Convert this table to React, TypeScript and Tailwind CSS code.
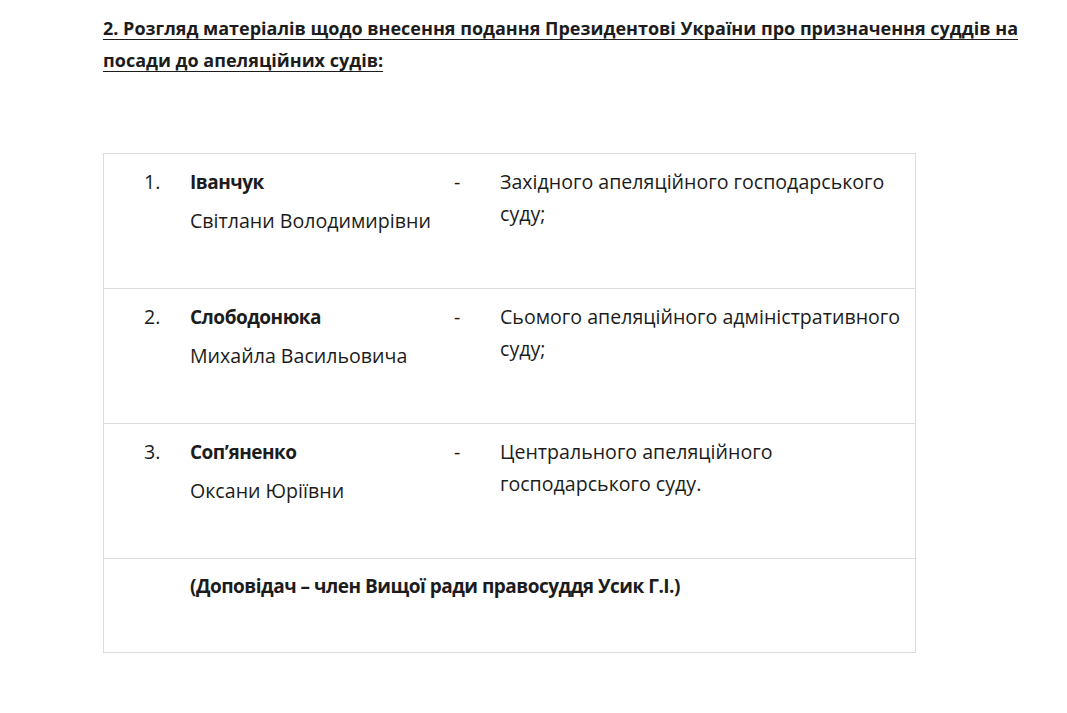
import React from 'react';

type Row = {
  num: string;
  surname: string;
  given: string;
  court: string[];
};

const rows: Row[] = [
  {
    num: '1.',
    surname: 'Іванчук',
    given: 'Світлани Володимирівни',
    court: ['Західного апеляційного господарського', 'суду;'],
  },
  {
    num: '2.',
    surname: 'Слободонюка',
    given: 'Михайла Васильовича',
    court: ['Сьомого апеляційного адміністративного', 'суду;'],
  },
  {
    num: '3.',
    surname: 'Соп’яненко',
    given: 'Оксани Юріївни',
    court: ['Центрального апеляційного', 'господарського суду.'],
  },
];

const font = { fontFamily: '"Open Sans", "Noto Sans", sans-serif' };

export default function App() {
  return (
    <div className="min-h-[713px] bg-white text-[#1c1c1c]" style={font}>
      <div className="pl-[103px] pt-[12px]">
        <h2 className="whitespace-nowrap text-[18px] font-bold leading-[32px] underline underline-offset-[4px] decoration-1">
          2. Розгляд матеріалів щодо внесення подання Президентові України про призначення суддів на
          <br />
          посади до апеляційних судів:
        </h2>

        <div className="mt-[77px] w-[813px] border border-[#dcdcdc]">
          {rows.map((r) => (
            <div
              key={r.num}
              className="grid h-[135px] grid-cols-[86px_264px_46px_1fr] border-b border-[#dcdcdc] pt-[12px] text-[19.6px] leading-[32px]"
            >
              <div className="pl-[40px]">{r.num}</div>
              <div>
                <p className="text-[19px] font-bold tracking-[-0.5px]">{r.surname}</p>
                <p className="mt-[7px]">{r.given}</p>
              </div>
              <div>-</div>
              <div>
                {r.court.map((c) => (
                  <p key={c}>{c}</p>
                ))}
              </div>
            </div>
          ))}
          <div className="grid h-[93px] grid-cols-[86px_1fr] pt-[11px] text-[19px] leading-[32px]">
            <div />
            <p className="font-bold tracking-[-0.5px]">(Доповідач – член Вищої ради правосуддя Усик Г.І.)</p>
          </div>
        </div>
      </div>
    </div>
  );
}
